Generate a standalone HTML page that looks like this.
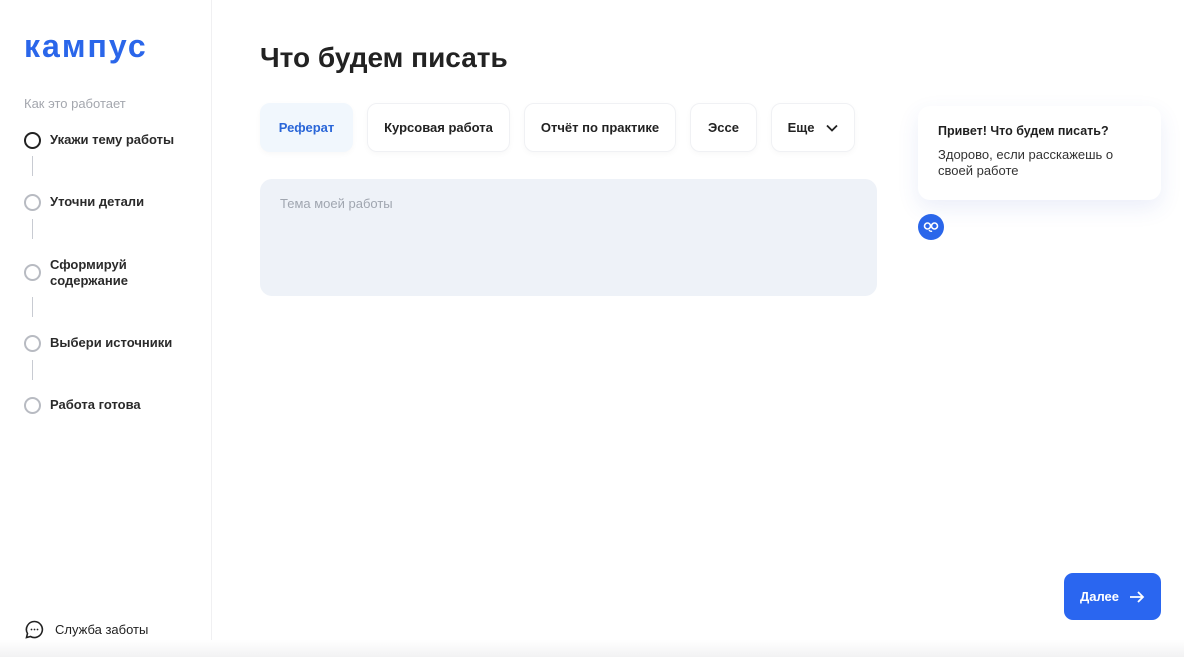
<!DOCTYPE html>
<html><head><meta charset="utf-8"><style>
*{box-sizing:border-box;margin:0;padding:0}
body{width:1184px;height:657px;overflow:hidden;background:#fff;font-family:"Liberation Sans","Noto Sans CJK SC",sans-serif;color:#1f1f1f;position:relative}
.side{position:absolute;left:0;top:0;width:212px;height:657px;border-right:1px solid #f0f0f2}
.logo{position:absolute;left:24px;top:28px;font-size:32px;font-weight:bold;color:#2a66ea;letter-spacing:2px;line-height:36px}
.how{position:absolute;left:24px;top:96px;font-size:13px;color:#a4a7ae}
.step{position:absolute;left:24px;font-size:13px;font-weight:bold;color:#2a2a2a;line-height:16px}
.step i{position:absolute;left:0;top:0;width:17px;height:17px;border:2px solid #b8bbc2;border-radius:50%}
.step span{position:absolute;left:26px;top:0;white-space:nowrap;line-height:16px}
.ln{position:absolute;left:32px;width:1px;height:20px;background:#c8cbd2}
h1{position:absolute;left:260px;top:42px;font-size:28px;font-weight:bold;color:#222}
.tab{position:absolute;top:103px;height:49px;border-radius:10px;border:1px solid #f0f1f4;box-shadow:0 2px 6px rgba(0,0,0,.03);font-size:13px;font-weight:bold;display:flex;align-items:center;justify-content:center;color:#222}
.area{position:absolute;left:260px;top:179px;width:617px;height:117px;background:#eef2f8;border-radius:12px}
.area span{position:absolute;left:20px;top:17px;font-size:13px;color:#a0a6b0}
.bubble{position:absolute;left:918px;top:106px;width:243px;height:94px;background:#fff;border-radius:12px;box-shadow:0 8px 22px rgba(60,90,200,.10)}
.btn{position:absolute;left:1064px;top:573px;width:97px;height:47px;background:#2a66f0;border-radius:9px;color:#fff;font-size:13px;font-weight:bold;display:flex;align-items:center;justify-content:center;gap:10px}
.foot{position:absolute;left:0;top:640px;width:1184px;height:17px;background:linear-gradient(#fff,#f2f2f3)}
</style></head><body>
<div class="side">
<div class="logo">кампус</div>
<div class="how">Как это работает</div>
<div class="step" style="top:132px"><i style="border-color:#222"></i><span>Укажи тему работы</span></div>
<div class="ln" style="top:156px"></div>
<div class="step" style="top:194px"><i></i><span>Уточни детали</span></div>
<div class="ln" style="top:219px"></div>
<div class="step" style="top:264px"><i></i><span style="top:-7px">Сформируй<br>содержание</span></div>
<div class="ln" style="top:297px"></div>
<div class="step" style="top:335px"><i></i><span>Выбери источники</span></div>
<div class="ln" style="top:360px"></div>
<div class="step" style="top:397px"><i></i><span>Работа готова</span></div>
<svg style="position:absolute;left:25px;top:620px" width="19" height="19" viewBox="0 0 19 19"><path d="M9.5 1.5a8 8 0 1 1-4 15L1.5 17.5l1-4a8 8 0 0 1 7-12z" fill="none" stroke="#222" stroke-width="1.6"/><circle cx="6.5" cy="9.5" r=".9" fill="#222"/><circle cx="9.5" cy="9.5" r=".9" fill="#222"/><circle cx="12.5" cy="9.5" r=".9" fill="#222"/></svg>
<div style="position:absolute;left:55px;top:622px;font-size:13px;color:#222">Служба заботы</div>
</div>
<h1>Что будем писать</h1>
<div class="tab" style="left:260px;width:93px;background:#f1f7fd;border-color:#f1f7fd;color:#2a66d8">Реферат</div>
<div class="tab" style="left:367px;width:143px">Курсовая работа</div>
<div class="tab" style="left:524px;width:152px">Отчёт по практике</div>
<div class="tab" style="left:690px;width:67px">Эссе</div>
<div class="tab" style="left:771px;width:84px;gap:12px">Еще <svg width="12" height="8" viewBox="0 0 12 8"><path d="M1 1.5l5 5 5-5" fill="none" stroke="#222" stroke-width="1.8"/></svg></div>
<div class="area"><span>Тема моей работы</span></div>
<div class="bubble">
<div style="position:absolute;left:20px;top:18px;font-size:12.5px;font-weight:bold">Привет! Что будем писать?</div>
<div style="position:absolute;left:20px;top:41px;font-size:13px;line-height:16px;color:#333">Здорово, если расскажешь о<br>своей работе</div>
</div>
<div style="position:absolute;left:918px;top:214px;width:26px;height:26px;border-radius:50%;background:#2a66ea"><svg width="26" height="26" viewBox="0 0 26 26"><circle cx="9.5" cy="12" r="3" fill="none" stroke="#fff" stroke-width="1.6"/><circle cx="16.5" cy="12" r="3" fill="none" stroke="#fff" stroke-width="1.6"/><path d="M11 16q1.5 2 3 1" stroke="#fff" stroke-width="1.4" fill="none"/></svg></div>
<div class="btn">Далее <svg width="16" height="14" viewBox="0 0 16 14"><path d="M1 7h13M9 2l5 5-5 5" fill="none" stroke="#fff" stroke-width="1.8"/></svg></div>
<div class="foot"></div>
</body></html>
